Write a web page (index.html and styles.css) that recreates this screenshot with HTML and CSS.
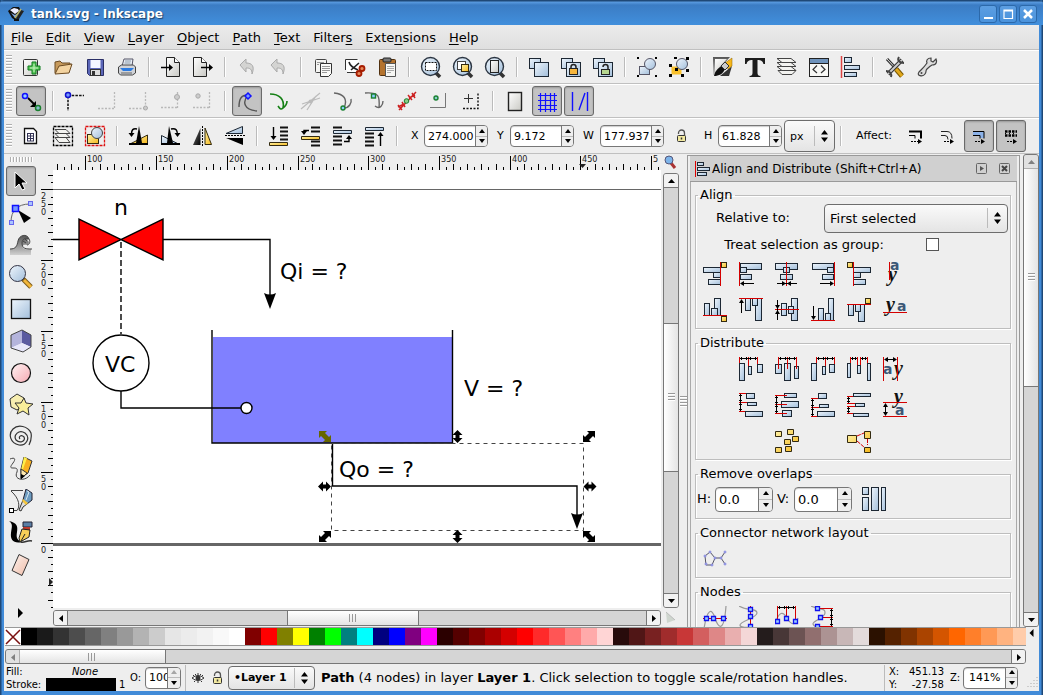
FILE: index.html
```
<!DOCTYPE html>
<html lang="en">
<head>
<meta charset="utf-8">
<title>tank.svg - Inkscape</title>
<link rel="stylesheet" href="styles.css">
</head>
<body>
<svg class="defs" aria-hidden="true">
  <defs>
    <linearGradient id="gb" x1="0" y1="0" x2="1" y2="1"><stop offset="0" stop-color="#eef5fc"/><stop offset="1" stop-color="#a3bfdb"/></linearGradient>
    <linearGradient id="gy" x1="0" y1="0" x2="1" y2="1"><stop offset="0" stop-color="#fff3a8"/><stop offset="1" stop-color="#f5b81c"/></linearGradient>
    <linearGradient id="gw" x1="0" y1="0" x2="1" y2="1"><stop offset="0" stop-color="#ffffff"/><stop offset="1" stop-color="#c9c9c4"/></linearGradient>
    <linearGradient id="gk" x1="0" y1="0" x2="1" y2="1"><stop offset="0" stop-color="#777"/><stop offset="1" stop-color="#000"/></linearGradient>
    <linearGradient id="gr" x1="0" y1="0" x2="1" y2="1"><stop offset="0" stop-color="#fff4f4"/><stop offset="1" stop-color="#f5a9b2"/></linearGradient>
    <linearGradient id="ge" x1="0" y1="0" x2="1" y2="1"><stop offset="0" stop-color="#fff4ee"/><stop offset="1" stop-color="#eebba8"/></linearGradient>
    <linearGradient id="gs" x1="0" y1="0" x2="0" y2="1"><stop offset="0" stop-color="#555"/><stop offset="1" stop-color="#d0d0d0"/></linearGradient>
    <symbol id="lens" viewBox="0 0 24 24"><path d="M17 18l4 4" stroke="#333" stroke-width="3.5"/><circle cx="11.500" cy="11.500" r="9" fill="url(#gb)" stroke="#2b3542" stroke-width="1.400"/></symbol>
    <symbol id="lock" viewBox="0 0 14 14"><path d="M4.500 5V4a3 3 0 0 1 6 0v3" fill="none" stroke="#555" stroke-width="1.300"/><rect x="3.500" y="6.500" width="8" height="6" rx="1" fill="#f2e9a0" stroke="#333"/><path d="M7.500 8.500v2" stroke="#333" stroke-width="1.500"/></symbol>
    <symbol id="bars" viewBox="0 0 24 24"><path d="M2.500 1v22" stroke="#d44" stroke-width="1.500"/><g class="b"><rect x="5.500" y="2.500" width="7" height="5"/><rect x="5.500" y="10.500" width="15" height="4"/><rect x="5.500" y="17.500" width="12" height="4"/></g></symbol>
    <symbol id="hgrip" viewBox="0 0 10 10"><path d="M1.500 1v8M4.500 1v8M7.500 1v8" stroke="#999"/></symbol>
  </defs>
</svg>

<div class="window">
  <header class="titlebar">
    <svg class="appicon" viewBox="0 0 18 16"><path d="M1 5L6 1h6l2 4-6 9-3-2z" fill="#111"/><path d="M3 4l4-2 4 1 1 2-4 3z" fill="#eef"/><path d="M4 7l4 2 3-2-3 5z" fill="#7ea7e0"/><path d="M9 13l5-9 3 1-5 8z" fill="#222"/><path d="M8 12l6-9" stroke="#b9b36a" stroke-width="1.500"/><path d="M7 14h5" stroke="#111" stroke-width="2"/></svg>
    <h1>tank.svg - Inkscape</h1>
    <div class="winbtns">
      <button aria-label="Minimize"><svg viewBox="0 0 16 16"><path d="M4 12h9" stroke="#fff" stroke-width="2"/></svg></button>
      <button aria-label="Maximize"><svg viewBox="0 0 16 16"><path d="M4 4h8.500v8.500H4zM4 5h9" fill="none" stroke="#fff" stroke-width="1.200"/></svg></button>
      <button aria-label="Close"><svg viewBox="0 0 16 16"><path d="M4 4l8 8M12 4l-8 8" stroke="#fff" stroke-width="2.500"/></svg></button>
    </div>
  </header>

  <nav class="menubar">
    <button><u>F</u>ile</button><button><u>E</u>dit</button><button><u>V</u>iew</button><button><u>L</u>ayer</button><button><u>O</u>bject</button><button><u>P</u>ath</button><button><u>T</u>ext</button><button>Filter<u>s</u></button><button>Exte<u>n</u>sions</button><button><u>H</u>elp</button>
  </nav>

  <div class="toolbar">
    <span class="grip"></span>
    <button class="tb" aria-label="New"><svg viewBox="0 0 24 24"><rect x="4.500" y="4.500" width="14" height="16" rx="1" fill="url(#gw)" stroke="#333"/><path d="M13 7h4v4h4v4h-4v4h-4v-4H9v-4h4z" fill="#5cc95c" stroke="#0d7a1c"/><path d="M15 9v8M11 13h8" stroke="#c8f0c0"/></svg></button>
    <button class="tb" aria-label="Open"><svg viewBox="0 0 24 24"><path d="M4 18V7l5-1 2 2h8v3" fill="#c79a5c" stroke="#6b4a22"/><path d="M4 19l4-8 13-2-3 9z" fill="#f3d3a0" stroke="#6b4a22"/></svg></button>
    <button class="tb" aria-label="Save"><svg viewBox="0 0 24 24"><path d="M4.500 4.500h16v16h-14l-2-2z" fill="#5b66b8" stroke="#2a2f66"/><rect x="7.500" y="5" width="10" height="8" fill="#f4f6ff"/><rect x="7.500" y="14.500" width="10" height="6" fill="#ddd" stroke="#333"/><rect x="9" y="16" width="3" height="4" fill="#333"/></svg></button>
    <button class="tb" aria-label="Print"><svg viewBox="0 0 24 24"><path d="M7 11l2-7h9l-1 7" fill="#e9eef5" stroke="#556"/><path d="M10 6h6M9.500 8h6" stroke="#89a"/><path d="M3.500 12l3-2h12l2 2v6l-3 2h-12l-2-2z" fill="#d0d3d8" stroke="#444"/><path d="M5 13h14l-3 3H8z" fill="#2c7be0"/><path d="M6 18h11" stroke="#666"/></svg></button>
    <span class="sep"></span>
    <button class="tb" aria-label="Import"><svg viewBox="0 0 24 24"><path d="M7.500 2.500h8l5 5v14h-13z" fill="url(#gw)" stroke="#222"/><path d="M15.500 2.500v5h5" fill="#fff" stroke="#222"/><path d="M2 12.500h9" stroke="#000" stroke-width="1.500"/><path d="M10 9l4 3.500-4 3.500z"/></svg></button>
    <button class="tb" aria-label="Export"><svg viewBox="0 0 24 24"><path d="M2.500 2.500h8l5 5v14h-13z" fill="url(#gw)" stroke="#222"/><path d="M10.500 2.500v5h5" fill="#fff" stroke="#222"/><path d="M10 12.500h9" stroke="#000" stroke-width="1.500"/><path d="M18 9l4 3.500-4 3.500z"/></svg></button>
    <span class="sep"></span>
    <button class="tb" aria-label="Undo"><svg viewBox="0 0 24 24"><path d="M5 10l6-6v4c6 0 9 3 6 11 0-5-2-6-6-6v4z" fill="#d4d4d2" stroke="#aaa"/></svg></button>
    <button class="tb" aria-label="Redo"><svg viewBox="0 0 24 24"><path d="M4 10l6-6v4c6 0 9 3 6 11 0-5-2-6-6-6v4z" fill="#d4d4d2" stroke="#aaa"/></svg></button>
    <span class="sep"></span>
    <button class="tb" aria-label="Copy"><svg viewBox="0 0 24 24"><rect x="4.500" y="4.500" width="11" height="13" rx="1" fill="#f4f4f2" stroke="#444"/><path d="M9.500 8.500h11v10l-3 3h-8z" fill="#fafaf8" stroke="#333"/><path d="M11 11.500h8M11 13.500h8M11 15.500h8M11 17.500h5M6 7.500h7M6 9.500h2" stroke="#999"/></svg></button>
    <button class="tb" aria-label="Cut"><svg viewBox="0 0 24 24"><path d="M2.500 4.500l13 0 2 6-4 7h-8l-3-3z" fill="#fff"/><path d="M2.500 15V4.500h12M4 17.500h9" fill="none" stroke="#333"/><path d="M6 7c1 4 4 6 9 8M8 15l8-7" fill="none" stroke="#222" stroke-width="1.600"/><circle cx="19" cy="13.500" r="2.500" fill="#e58a5b" stroke="#a61c00" stroke-width="1.800"/><circle cx="16" cy="18.500" r="2.500" fill="#e58a5b" stroke="#a61c00" stroke-width="1.800"/></svg></button>
    <button class="tb" aria-label="Paste"><svg viewBox="0 0 24 24"><rect x="4.500" y="4.500" width="16" height="16" rx="1" fill="#b4732e" stroke="#50300f"/><rect x="8" y="3" width="8" height="4" rx="1" fill="#777" stroke="#222"/><path d="M10.500 8.500h10v13h-10z" fill="#f7f7f4" stroke="#555"/><path d="M12 11.500h7M12 13.500h7M12 15.500h7M12 17.500h4" stroke="#aaa"/></svg></button>
    <span class="sep"></span>
    <button class="tb" aria-label="Zoom selection"><svg viewBox="0 0 24 24"><use href="#lens"/><rect x="6.500" y="7.500" width="11" height="8" fill="#fff" stroke="#111" stroke-dasharray="2 1"/></svg></button>
    <button class="tb" aria-label="Zoom drawing"><svg viewBox="0 0 24 24"><use href="#lens"/><rect x="6.500" y="6.500" width="8" height="8" fill="#fff" stroke="#444"/><rect x="10.500" y="9.500" width="7" height="7" class="y"/></svg></button>
    <button class="tb" aria-label="Zoom page"><svg viewBox="0 0 24 24"><use href="#lens"/><rect x="7.500" y="5.500" width="8" height="12" fill="url(#gw)" stroke="#222"/></svg></button>
    <span class="sep"></span>
    <button class="tb" aria-label="Duplicate"><svg viewBox="0 0 24 24" class="b"><rect x="2.500" y="3.500" width="11" height="10"/><rect x="7.500" y="7.500" width="14" height="14"/></svg></button>
    <button class="tb" aria-label="Clone"><svg viewBox="0 0 24 24"><g class="b"><rect x="2.500" y="3.500" width="11" height="10"/><rect x="7.500" y="7.500" width="14" height="14"/></g><path d="M12 14v-2a2.500 2.500 0 0 1 5 0v2" fill="none" stroke="#222" stroke-width="1.500"/><rect x="10.500" y="13.500" width="8" height="6" fill="#f5b53c" stroke="#222"/></svg></button>
    <button class="tb" aria-label="Unlink clone"><svg viewBox="0 0 24 24"><g class="b"><rect x="2.500" y="3.500" width="11" height="10"/><rect x="7.500" y="7.500" width="14" height="14"/></g><path d="M12 12a2.500 2.500 0 0 1 5 0v2" fill="none" stroke="#222" stroke-width="1.500"/><rect x="10.500" y="14.500" width="8" height="5" fill="#b6d690" stroke="#222"/></svg></button>
    <span class="sep"></span>
    <button class="tb" aria-label="Group"><svg viewBox="0 0 24 24"><rect x="4.500" y="11.500" width="10" height="8" fill="url(#gb)" stroke="#556"/><circle cx="15" cy="9" r="5.500" fill="url(#gb)" stroke="#556"/><path d="M2 2h2v2H2zM20 2h2v2h-2zM2 20h2v2H2zM20 20h2v2h-2z"/></svg></button>
    <button class="tb" aria-label="Ungroup"><svg viewBox="0 0 24 24"><rect x="4.500" y="11.500" width="10" height="8" fill="#f8c02c"/><circle cx="15" cy="9" r="5.500" fill="url(#gb)" stroke="#556"/><path d="M7 2h3v2H7zM19 2h3v3h-3zM2 9h3v3H2zM2 19h3v3H2zM19 14h3v3h-3zM14 19h3v3h-3zM8 13h3v3H8z"/></svg></button>
    <span class="sep"></span>
    <button class="tb" aria-label="Fill and stroke"><svg viewBox="0 0 24 24"><path d="M2 2h17L3 20H2z" fill="url(#gs)"/><path d="M4 4h12L4 17z" fill="url(#gw)"/><path d="M3 21c1-5 4-8 8-10l3 3c-2 5-6 7-11 7z" fill="#111"/><path d="M9 21h9l3-10z" fill="#333"/><path d="M14 8l7-5v8l-4 3z" fill="#f6b71c" stroke="#8a6200" stroke-width=".5"/><path d="M10 11l4-4 4 4-4 4z" fill="#ccc" stroke="#333"/></svg></button>
    <button class="tb" aria-label="Text and font"><svg viewBox="0 0 24 24"><path d="M2 3h20v6h-1.500c-1-3-2-4-6-4v13c0 2 1 3 3 3v1h-11v-1c2 0 3-1 3-3V5c-4 0-5 1-6 4H2z" fill="#1c1c1c"/></svg></button>
    <button class="tb" aria-label="Layers"><svg viewBox="0 0 24 24"><g fill="#f3f3f0" stroke="#444"><path d="M6 15.500h15l-4 4H7l-4-4z"/><path d="M2 11.500h14l5 4H7z"/><path d="M2 7.500h14l5 4H7z"/><path d="M2 3.500h14l5 4H7z"/></g></svg></button>
    <button class="tb" aria-label="XML editor"><svg viewBox="0 0 24 24"><rect x="2.500" y="3.500" width="19" height="18" fill="#f8f8f5" stroke="#222"/><path d="M3 4h18v4H3z" fill="#6f93bb"/><path d="M3 8.500h18" stroke="#222"/><path d="M10 10.500l-4 4 4 3.500M14 10.500l4 4-4 3.500" fill="none" stroke="#333" stroke-width="1.200"/></svg></button>
    <button class="tb" aria-label="Align"><svg viewBox="0 0 24 24"><use href="#bars"/></svg></button>
    <span class="sep"></span>
    <button class="tb" aria-label="Preferences"><svg viewBox="0 0 24 24"><path d="M4 4l14 15" stroke="#333" stroke-width="3"/><path d="M4 4l14 15" stroke="#ddd"/><path d="M19 5L5 19" stroke="#333" stroke-width="4"/><path d="M19 5L5 19" stroke="#ccc" stroke-width="2"/><path d="M16 2c-2 3 0 6 5 6M8 22c1-3-1-6-5-6" fill="none" stroke="#444" stroke-width="2"/><path d="M13 14l6 7" stroke="#7a5600" stroke-width="5"/><path d="M13 14l6 7" stroke="#e0a81c" stroke-width="3"/></svg></button>
    <button class="tb" aria-label="Document properties"><svg viewBox="0 0 24 24"><path d="M4 17c-3 4 4 5 6 2s0-3 2-5 3-3 5-4c5 0 5-4 4-6l-3 3-2-1v-3c-4 0-5 3-4 5-2 3-4 5-6 7z" fill="#ddd" stroke="#444" stroke-width="1.200"/><circle cx="6.500" cy="18" r="1" fill="#444"/></svg></button>
  </div>

  <div class="toolbar">
    <span class="grip"></span>
    <button class="tb on" aria-label="Enable snapping"><svg viewBox="0 0 24 24"><path d="M9 9l6 6" stroke="#000" stroke-width="1.800"/><path d="M17 12v6h-6z"/><circle cx="6" cy="7" r="2.500" fill="#9cf" stroke="#11f" stroke-width="1.500"/><circle cx="19" cy="19" r="2.500" fill="#8bc" stroke="#1a8030" stroke-width="1.500"/></svg></button>
    <span class="sep"></span>
    <button class="tb" aria-label="Snap bounding box"><svg viewBox="0 0 24 24"><path d="M5 6.500h16M5 7v15" stroke="#111" stroke-width="1.500" stroke-dasharray="2.500 1.200"/><circle cx="5" cy="6" r="2.500" fill="#79f" stroke="#11c" stroke-width="1.500"/></svg></button>
    <button class="tb" aria-label="Snap edges"><svg viewBox="0 0 24 24" class="dis"><path d="M3 19.500h16M19.500 3v16"/></svg></button>
    <button class="tb" aria-label="Snap corners"><svg viewBox="0 0 24 24" class="dis"><path d="M2 19.500h16M18.500 3v14"/><circle cx="18.500" cy="19" r="2" class="solid"/></svg></button>
    <button class="tb" aria-label="Snap edge midpoints"><svg viewBox="0 0 24 24" class="dis"><path d="M2 18.500h16M18.500 3v16"/><circle cx="18" cy="8" r="2.500" class="solid"/></svg></button>
    <button class="tb" aria-label="Snap centers"><svg viewBox="0 0 24 24" class="dis"><path d="M2 18.500h16M18.500 3v16"/><circle cx="7" cy="7" r="2.200" class="solid"/></svg></button>
    <span class="sep"></span>
    <button class="tb on" aria-label="Snap nodes"><svg viewBox="0 0 24 24"><path d="M4 18c0-8 2-12 9-12-6 7-4 15 9 16" fill="none" stroke="#555" stroke-width="1.400"/><path d="M13 4l3 3-3 3-3-3z" fill="#79f" stroke="#11f" stroke-width="1.500"/></svg></button>
    <button class="tb" aria-label="Snap paths"><svg viewBox="0 0 24 24" class="grn"><path d="M3 5c9 0 15 5 13 14-2 2-3 1-5-2M16 19c3-2 4-5 4-7"/></svg></button>
    <button class="tb" aria-label="Snap intersections"><svg viewBox="0 0 24 24"><path d="M2 20L21 4M3 15l18-6M17 7L8 21" stroke="#bbb" stroke-width="1.200"/><circle cx="11.500" cy="12.500" r="2" fill="#bbb"/></svg></button>
    <button class="tb" aria-label="Snap cusp nodes"><svg viewBox="0 0 24 24"><path d="M3 4c10 1 14 6 10 15M13 19c5 0 8-5 7-9" fill="none" stroke="#666" stroke-width="1.400"/><circle cx="12" cy="19" r="2" fill="#8cf" stroke="#1a8030" stroke-width="1.400"/></svg></button>
    <button class="tb" aria-label="Snap smooth nodes"><svg viewBox="0 0 24 24"><path d="M2 4c14-1 15 3 14 15M12 17c5 4 8-1 8-5" fill="none" stroke="#666" stroke-width="1.400"/><rect x="8.500" y="5" width="4" height="4" fill="#8cf" stroke="#1a8030" stroke-width="1.400"/></svg></button>
    <button class="tb" aria-label="Snap line midpoints"><svg viewBox="0 0 24 24"><path d="M4 21L21 3M3 16l4 5M7 13l3 5M13 6l4 5M17 4l3 5M3 18l6-3M14 9l6-3" stroke="#c22" stroke-width="1.500"/><circle cx="11.500" cy="12" r="2.300" fill="#8c8" stroke="#1a8030"/></svg></button>
    <button class="tb" aria-label="Snap object centers"><svg viewBox="0 0 24 24"><path d="M3 18.500h15.500V4" fill="none" stroke="#777"/><circle cx="9" cy="9" r="2" fill="#8cc" stroke="#1a8030" stroke-width="1.400"/></svg></button>
    <button class="tb" aria-label="Snap rotation centers"><svg viewBox="0 0 24 24"><path d="M5 9.500h9M9.500 5v9" stroke="#333"/><path d="M4 19.500h15V3" fill="none" stroke="#111" stroke-width="1.400" stroke-dasharray="2 1.500"/></svg></button>
    <span class="sep"></span>
    <button class="tb" aria-label="Snap page border"><svg viewBox="0 0 24 24"><rect x="5.500" y="3.500" width="13" height="18" fill="url(#gw)" stroke="#222" stroke-width="1.400"/></svg></button>
    <button class="tb on" aria-label="Snap grid"><svg viewBox="0 0 24 24"><path d="M3 6.500h19M3 11.500h19M3 16.500h19M3 20.500h19M5.500 4v19M10.500 4v19M15.500 4v19M19.500 4v19" stroke="#11f" stroke-width="1.200"/></svg></button>
    <button class="tb on" aria-label="Snap guides"><svg viewBox="0 0 24 24"><path d="M5.500 3v19M12 21l6-17M20.500 3v19" stroke="#11f" stroke-width="1.400"/></svg></button>
  </div>

  <div class="toolbar tall">
    <span class="grip"></span>
    <button class="tb" aria-label="Select all"><svg viewBox="0 0 24 24"><path d="M5.500 4.500h9l3 3v12h-12z" fill="#fff" stroke="#111" stroke-width="1.300"/><path d="M8 9.500h7M8 12h7M8 14.500h7M8 17h7M8.500 9v8M11.500 9v8M14.500 9v8" stroke="#335"/></svg></button>
    <button class="tb" aria-label="Select all in layers"><svg viewBox="0 0 24 24"><rect x="2.500" y="2.500" width="19" height="19" fill="none" stroke="#000" stroke-width="1.300" stroke-dasharray="3 1"/><g fill="#f3f3f0" stroke="#444"><path d="M4 13.500h11l4 5H8z"/><path d="M4 9.500h11l4 4H8z"/><path d="M4 5.500h11l4 4H8z"/></g></svg></button>
    <button class="tb" aria-label="Deselect"><svg viewBox="0 0 24 24"><rect x="2.500" y="2.500" width="19" height="19" fill="none" stroke="#d11" stroke-width="1.300" stroke-dasharray="3 1"/><rect x="4.500" y="10.500" width="11" height="9" class="y"/><circle cx="14" cy="9" r="5.500" fill="url(#gb)" stroke="#444"/></svg></button>
    <span class="sep"></span>
    <button class="tb" aria-label="Rotate left"><svg viewBox="0 0 24 24"><path d="M20.500 11v8.500H4z" class="y"/><path d="M12 2l3 17H9z"/><path d="M2 20h19" stroke="#000" stroke-width="2"/><path d="M10 5C6 4 4.500 6 4.500 10" fill="none" stroke="#000" stroke-width="1.500"/><path d="M1.500 9h6l-3 4z"/></svg></button>
    <button class="tb" aria-label="Rotate right"><svg viewBox="0 0 24 24"><path d="M2.500 11.500l16 8h-16z" class="b"/><path d="M10 2l4 17H8z"/><path d="M2 20h19" stroke="#000" stroke-width="2"/><path d="M12 5c5-1 6.500 1 6.500 6" fill="none" stroke="#000" stroke-width="1.500"/><path d="M15.500 9h6l-3 4z"/></svg></button>
    <button class="tb" aria-label="Flip horizontal"><svg viewBox="0 0 24 24"><path d="M9.500 4v17H2z" fill="url(#gk)"/><path d="M14 4v16.500h6.500z" class="y"/><path d="M11.500 2v20" stroke="#000" stroke-dasharray="2 1"/></svg></button>
    <button class="tb" aria-label="Flip vertical"><svg viewBox="0 0 24 24"><path d="M19.500 2.500v7L3 9.500z" class="b"/><path d="M20 21v-7H3z"/><path d="M2 11.500h20" stroke="#000" stroke-dasharray="2 1"/></svg></button>
    <span class="sep"></span>
    <button class="tb" aria-label="Lower to bottom"><svg viewBox="0 0 24 24"><path d="M13 3.500h8M13 7.500h8M13 11.500h8M13 15.500h8" stroke="#111" stroke-width="2"/><path d="M2.500 18.500h18v3h-18z" class="y"/><path d="M6.500 3v10" stroke="#000" stroke-width="1.400"/><path d="M3.500 12h6l-3 4z"/></svg></button>
    <button class="tb" aria-label="Lower"><svg viewBox="0 0 24 24"><path d="M12 3.500h9M12 7.500h9M12 17.500h9M12 21.500h9" stroke="#111" stroke-width="2"/><path d="M2.500 12.500h18v3h-18z" class="y"/><path d="M10 6.500H5v2" fill="none" stroke="#000" stroke-width="1.400"/><path d="M2 7h6l-3 4z"/></svg></button>
    <button class="tb" aria-label="Raise"><svg viewBox="0 0 24 24"><path d="M2 3.500h9M2 12.500h9M2 16.500h9M2 20.500h9" stroke="#111" stroke-width="2"/><path d="M2.500 6.500h18v3h-18z" class="b"/><path d="M13 17.500h5v-3" fill="none" stroke="#000" stroke-width="1.400"/><path d="M15 15h6l-3-4z"/></svg></button>
    <button class="tb" aria-label="Raise to top"><svg viewBox="0 0 24 24"><path d="M2 9.500h9M2 13.500h9M2 17.500h9M2 21.500h9" stroke="#111" stroke-width="2"/><path d="M2.500 3.500h18v3h-18z" class="b"/><path d="M17.500 11v11" stroke="#000" stroke-width="1.400"/><path d="M14.500 12h6l-3-4z"/></svg></button>
    <span class="sep"></span>
    <label class="coord" for="cx">X</label>
    <span class="spin"><input id="cx" value="274.000"><span class="steps"><button aria-label="Increase X"></button><button aria-label="Decrease X"></button></span></span>
    <label class="coord" for="cy">Y</label>
    <span class="spin"><input id="cy" value="9.172"><span class="steps"><button aria-label="Increase Y"></button><button aria-label="Decrease Y"></button></span></span>
    <label class="coord" for="cw">W</label>
    <span class="spin"><input id="cw" value="177.937"><span class="steps"><button aria-label="Increase W"></button><button aria-label="Decrease W"></button></span></span>
    <button class="lockbtn" aria-label="Lock ratio"><svg viewBox="0 0 14 14"><use href="#lock"/></svg></button>
    <label class="coord hlab" for="ch">H</label>
    <span class="spin"><input id="ch" value="61.828"><span class="steps"><button aria-label="Increase H"></button><button aria-label="Decrease H"></button></span></span>
    <select class="combo unit" aria-label="Unit"><option>px</option></select>
    <span class="sep"></span>
    <span class="affect">Affect:</span>
    <button class="tb" aria-label="Scale stroke"><svg viewBox="0 0 24 24"><path d="M6 7.500h12v7" fill="none" stroke="#000" stroke-width="2"/><path d="M6 11.500h6v3" fill="none" stroke="#000"/><path d="M8 17.500h7" stroke="#000" stroke-dasharray="2 1"/><path d="M15 15l4 2.500-4 2.500z"/></svg></button>
    <button class="tb" aria-label="Scale corners"><svg viewBox="0 0 24 24"><path d="M6 7.500h6q5 0 5 7M6 11.500h4q3 0 3 4" fill="none" stroke="#222"/><path d="M9 17.500h7" stroke="#000" stroke-dasharray="2 1"/><path d="M15 15l4 2.500-4 2.500z"/></svg></button>
    <button class="tb on" aria-label="Move gradients"><svg viewBox="0 0 24 24"><path d="M6 8h11v6h-4v-3H6z" fill="#8cb2e8"/><path d="M6 7.500h11v7M6 11.500h7v3" fill="none" stroke="#000"/><path d="M8 17.500h7" stroke="#000" stroke-dasharray="2 1"/><path d="M14 15l4 2.500-4 2.500z"/></svg></button>
    <button class="tb on" aria-label="Move patterns"><svg viewBox="0 0 24 24"><path d="M6 7.500h12M6 11.500h12" stroke="#000" stroke-width="2.500" stroke-dasharray="2.500 1"/><path d="M6 9.500h12" stroke="#000" stroke-dasharray="1 3"/><path d="M8 17.500h7" stroke="#000" stroke-dasharray="2 1"/><path d="M14 15l4 2.500-4 2.500z"/></svg></button>
  </div>

  <main class="work">
    <aside class="toolbox">
      <span class="grip flat"></span>
      <button class="tool on" aria-label="Selector"><svg viewBox="0 0 24 24"><path d="M6 3v16l4-4 3 6 3-1-3-6h5z" fill="#000" stroke="#fff"/></svg></button>
      <button class="tool" aria-label="Node"><svg viewBox="0 0 24 24"><path d="M2 21C2 10 8 3 21 3" fill="none" stroke="#666"/><path d="M9 9l13 8-7 5z"/><g fill="#aac4ff" stroke="#66e"><rect x=".5" y="19.500" width="4" height="4"/><rect x="19.500" y=".5" width="4" height="4"/></g><rect x="3.500" y="4.500" width="6" height="6" fill="#79f" stroke="#11f" stroke-width="1.500"/></svg></button>
      <button class="tool" aria-label="Tweak"><svg viewBox="0 0 24 24"><path d="M1 22v-6c6 0 7-3 8-8 1-6 9-8 11-2l-2 1c2 1 3 4 0 5-3-1-5 0-4 3 2 2 5 1 8 1v6z" fill="url(#gs)"/><path d="M1 16c6 0 7-3 8-8 1-6 9-8 11-2-3-2-7 0-7 4 0 6 4 6 10 6M20 6c2 3 0 6-2 6M16 6l2 2M14 8l3 2" fill="none" stroke="#444"/></svg></button>
      <button class="tool" aria-label="Zoom"><svg viewBox="0 0 24 24"><path d="M14 14l8 8" stroke="#7b5a18" stroke-width="5"/><path d="M15 15l7 7" stroke="#f2b63a" stroke-width="3"/><circle cx="8.500" cy="8.500" r="8" fill="url(#gb)" stroke="#334"/></svg></button>
      <button class="tool" aria-label="Rectangle"><svg viewBox="0 0 24 24"><rect x="2.500" y="2.500" width="19" height="19" fill="url(#gb)" stroke="#111" stroke-width="1.300"/></svg></button>
      <button class="tool" aria-label="3D box"><svg viewBox="0 0 24 24"><path d="M2 6l11-5v13L2 19z" fill="#b4b4dc"/><path d="M13 1l9 5v12l-9-4z" fill="#5a5aa0"/><path d="M2 19l11-5 9 4-8 5z" fill="#e7e7fa"/><path d="M2 6l11-5 9 5v12l-8 5-12-4z" fill="none" stroke="#444"/></svg></button>
      <button class="tool" aria-label="Ellipse"><svg viewBox="0 0 24 24"><circle cx="12" cy="12" r="9.500" fill="url(#gr)" stroke="#111" stroke-width="1.200"/></svg></button>
      <button class="tool" aria-label="Star"><svg viewBox="0 0 24 24"><path d="M1 6l7-5 7 4v8l-7 4-6-3z" fill="#f7eeb0" stroke="#333"/><path d="M15 5l2 5 7 1-5 4 1 7-6-4-6 3 2-6-4-5h6z" fill="#f9ef9a" stroke="#333"/></svg></button>
      <button class="tool" aria-label="Spiral"><svg viewBox="0 0 24 24"><path d="M11 14c-2-2 1-5 4-2 2 4-4 7-8 3-3-5 3-11 9-7 6 5 1 13-6 12C1 18-1 9 4 4s15-3 18 4c1 5 0 8-2 12" fill="none" stroke="#333" stroke-width="1.200"/></svg></button>
      <button class="tool" aria-label="Pencil"><svg viewBox="0 0 24 24"><path d="M1 2c5-2 6 0 3 4s-3 5 0 5 5 0 4 4c-4 8 8 10 13 3" fill="none" stroke="#444"/><path d="M15 0l8 4-4 12-7 5 0-9z" fill="#f8b020" stroke="#333"/><path d="M15 0l3 1-4 11-2 1z" fill="#fff04a"/><path d="M12 12l6 4-6 6z" fill="#ffe9b0" stroke="#333"/><path d="M12 17v5l4-3z"/></svg></button>
      <button class="tool" aria-label="Bezier"><svg viewBox="0 0 24 24"><path d="M2 1.500h12M2 2c9 8 9 16 6 19.500H4" fill="none" stroke="#444"/><rect x=".5" y="19.500" width="4" height="4" fill="#fff" stroke="#000"/><path d="M17 0l6 4v7l-5 4-4-4z" fill="#6d9cc0" stroke="#223"/><path d="M14 11l4 4-4 3-2 4-2-1 2-5z" fill="#ddd" stroke="#333"/><path d="M14 10l5 4-2 2-4-4z" fill="#f4c53c"/><path d="M18 2l2 1-3 8" stroke="#d8e8f4" fill="none"/></svg></button>
      <button class="tool" aria-label="Calligraphy"><svg viewBox="0 0 24 24"><path d="M0 0c8 2 9 5 8 11s0 8 5 10c-8 2-12-2-11-9S4 3 0 0z"/><path d="M12 21c4 1 6-2 11-1" fill="none" stroke="#333" stroke-width="1.500"/><path d="M14 1h9v5h-9z" fill="#5b7fa5" stroke="#223"/><path d="M14 6h7v3h-7z" fill="#c0392b"/><path d="M13 8l8 1-1 7-9 5-1-4z" fill="#f6cf58" stroke="#222"/><path d="M12 20l4-7" stroke="#222"/></svg></button>
      <button class="tool" aria-label="Eraser"><svg viewBox="0 0 24 24"><path d="M10 1.500l10 5-7 16-10-5z" fill="url(#ge)" stroke="#333"/></svg></button>
      <button class="more" aria-label="More tools"><svg viewBox="0 0 8 10"><path d="M1 0v10l5-5z"/></svg></button>
    </aside>

    <section class="editor">
      <span></span>
      <svg class="ruler" id="hruler"><g></g><path d="M579 10h7l-3.500 4z" transform="translate(-53)"/></svg>
      <button class="cornerbtn" aria-label="Zoom on resize"><svg viewBox="0 0 14 14"><path d="M8 8l4 5" stroke="#a33" stroke-width="3"/><circle cx="6" cy="5" r="4" fill="#7db4ea" stroke="#557"/></svg></button>
      <svg class="ruler" id="vruler"><g></g><path d="M8 408l4 4-4 4z"/></svg>
      <svg class="canvas" role="img" aria-label="Tank drawing">
        <g transform="translate(-53 -170)">
          <path d="M0 189.500h4000" stroke="#666"/>
          <path d="M0 544.500h4000" stroke="#666" stroke-width="3"/>
          <g fill="none" stroke="#000" stroke-width="1.400">
            <path d="M40 239.500H79M163 239.500h107V297"/>
            <path d="M121 242v92" stroke-dasharray="6 3"/>
            <path d="M79 219v41l84-41v41z" fill="#f00"/>
            <circle cx="121" cy="363" r="28"/>
          </g>
          <path d="M213 337h239v106H213z" fill="#8080ff"/>
          <g fill="none" stroke="#000" stroke-width="1.400">
            <path d="M212 330v113h240.500V330"/>
            <path d="M121 391v17h122"/>
            <circle cx="246.500" cy="408" r="5.500" fill="#fff"/>
            <path d="M332.500 443v43H577v30"/>
          </g>
          <path d="M264 293q6 3 12 0l-6 16zM571 513q6 3 12 0l-6 16z"/>
          <g class="drawtext">
            <text x="114" y="215">n</text><text x="105" y="372">VC</text><text x="280" y="279">Qi = ?</text><text x="464" y="396">V = ?</text><text x="339" y="477">Qo = ?</text>
          </g>
          <path d="M331.500 443.500h252v87h-252z" fill="none" stroke="#444" stroke-dasharray="4 4"/>
          <path d="M319 431h8l-2 2 4 4 2-2v7h-8l2-2-4-4-2 2z" fill="#660"/>
          <path d="M583 531h8l-2 2 4 4 2-2v7h-8l2-2-4-4-2 2z"/>
          <path d="M595 431v7l-2-2-4 4 2 2h-8v-7l2 2 4-4-2-2zM331 531v7l-2-2-4 4 2 2h-8v-7l2 2 4-4-2-2z"/>
          <path d="M457.500 430l5 5h-3v3h3l-5 5-5-5h3v-3h-3zM457.500 530l5 5h-3v3h3l-5 5-5-5h3v-3h-3z"/>
          <path d="M318 486.500l5-5v3h3v-3l5 5-5 5v-3h-3v3zM583.500 486.500l5-5v3h3v-3l5 5-5 5v-3h-3v3z"/>
        </g>
      </svg>
      <div class="vscroll">
        <button class="arrow up" aria-label="Scroll up"></button><span class="trackpart t1"></span><span class="thumb"><i></i></span><span class="trackpart t2"></span><button class="arrow down" aria-label="Scroll down"></button>
      </div>
      <span></span>
      <div class="hscroll">
        <button class="arrow left" aria-label="Scroll left"></button><span class="trackpart t1"></span><span class="thumb"><svg viewBox="0 0 10 10"><use href="#hgrip"/></svg></span><span class="trackpart t2"></span><button class="arrow right" aria-label="Scroll right"></button>
      </div>
      <button class="cornerbtn" aria-label="Color management"><svg viewBox="0 0 14 14"><path d="M3 2l9 8-8 3z" fill="#cfd6cf"/><path d="M3 2l9 8" stroke="#bbb"/></svg></button>
    </section>

    <div class="splitter"><i></i></div>

    <section class="dock">
      <div class="docktitle">
        <svg viewBox="0 0 16 16"><path d="M.5 0v16" stroke="#d00"/><g class="b"><rect x="2.500" y="1.500" width="6" height="3"/><rect x="2.500" y="6.500" width="12" height="3"/><rect x="2.500" y="11.500" width="9" height="3"/></g></svg>
        <h2>Align and Distribute (Shift+Ctrl+A)</h2>
        <button aria-label="Iconify"><svg viewBox="0 0 12 12"><rect x=".5" y=".5" width="10" height="10" rx="1" fill="none" stroke="#666"/><path d="M4 3v5l4-2.500z" fill="#555"/></svg></button>
        <button aria-label="Close dialog"><svg viewBox="0 0 12 12"><rect x=".5" y=".5" width="10" height="10" rx="1" fill="none" stroke="#666"/><path d="M3 3l5 5M8 3L3 8" stroke="#444" stroke-width="2"/></svg></button>
      </div>
      <div class="dockbody">
        <fieldset>
          <legend>Align</legend>
          <div class="relrow"><label for="rel">Relative to:</label><select id="rel" class="combo rel"><option>First selected</option></select></div>
          <div class="treatrow"><label for="treat">Treat selection as group:</label><input id="treat" type="checkbox"></div>
          <div class="icongrid al">
            <button aria-label="Right to left of anchor"><svg viewBox="0 0 24 24"><g class="b"><rect x=".5" y="5.500" width="17" height="5"/><rect x="10.500" y="10.500" width="7" height="5"/><rect x="5.500" y="17.500" width="12" height="5"/></g><rect x="18.500" y=".5" width="5" height="5" class="y"/><path class="r" d="M17.500 0v24"/></svg></button>
            <button aria-label="Align left"><svg viewBox="0 0 24 24"><g class="b"><rect x="1.500" y="1.500" width="21" height="6"/><rect x="1.500" y="5.500" width="6" height="5"/><rect x="1.500" y="12.500" width="11" height="5"/></g><path class="r" d="M.5 0v24"/><path class="k" d="M2 21.500h13"/><path d="M5 19v5l-4-2.500z"/></svg></button>
            <button aria-label="Center horizontally"><svg viewBox="0 0 24 24"><g class="b"><rect x=".5" y="1.500" width="22" height="6"/><rect x="8.500" y="5.500" width="6" height="5"/><rect x="5.500" y="12.500" width="12" height="5"/></g><path class="r" d="M11.500 0v24"/><path class="k" d="M2 21.500h20"/><path d="M7 19v5l4-2.500zM16 19v5l-4-2.500z"/></svg></button>
            <button aria-label="Align right"><svg viewBox="0 0 24 24"><g class="b"><rect x="1.500" y="1.500" width="21" height="6"/><rect x="16.500" y="5.500" width="6" height="5"/><rect x="11.500" y="12.500" width="11" height="5"/></g><path class="r" d="M23.500 0v24"/><path class="k" d="M9 21.500h13"/><path d="M19 19v5l4-2.500z"/></svg></button>
            <button aria-label="Left to right of anchor"><svg viewBox="0 0 24 24"><g class="b"><rect x="6.500" y="5.500" width="17" height="5"/><rect x="6.500" y="10.500" width="7" height="5"/><rect x="6.500" y="17.500" width="12" height="5"/></g><rect x=".5" y=".5" width="5" height="5" class="y"/><path class="r" d="M6.500 0v24"/></svg></button>
            <button aria-label="Align text horizontally"><svg viewBox="0 0 24 24"><text x="7" y="8" class="ga">a</text><text x="5" y="19" class="gy">y</text><path class="r" d="M6.500 0v18"/></svg></button>
            <button aria-label="Bottom to top of anchor"><svg viewBox="0 0 24 24"><g class="b"><rect x="1.500" y="5.500" width="5" height="12"/><rect x="11.500" y=".5" width="6" height="17"/><rect x="8.500" y="10.500" width="6" height="7"/></g><rect x="18.500" y="18.500" width="5" height="5" class="y"/><path class="r" d="M0 17.500h24"/></svg></button>
            <button aria-label="Align top"><svg viewBox="0 0 24 24"><g class="b"><rect x="6.500" y=".5" width="5" height="12"/><rect x="16.500" y=".5" width="6" height="22"/><rect x="13.500" y=".5" width="5" height="7"/></g><path class="r" d="M0 .5h24"/><path class="k" d="M2.500 2v13"/><path d="M0 5h5L2.500 1z"/></svg></button>
            <button aria-label="Center vertically"><svg viewBox="0 0 24 24"><g class="b"><rect x="6.500" y="5.500" width="5" height="12"/><rect x="16.500" y=".5" width="6" height="22"/><rect x="13.500" y="8.500" width="5" height="7"/></g><path class="r" d="M0 11.500h24"/><path class="k" d="M2.500 2v20"/><path d="M0 7h5l-2.500 4zM0 16h5l-2.500-4z"/></svg></button>
            <button aria-label="Align bottom"><svg viewBox="0 0 24 24"><g class="b"><rect x="7.500" y="10.500" width="5" height="12"/><rect x="17.500" y=".5" width="5" height="22"/><rect x="14.500" y="15.500" width="5" height="7"/></g><path class="r" d="M0 22.500h24"/><path class="k" d="M2.500 8v13"/><path d="M0 18h5l-2.500 4z"/></svg></button>
            <button aria-label="Top to bottom of anchor"><svg viewBox="0 0 24 24"><g class="b"><rect x="1.500" y="6.500" width="5" height="11"/><rect x="11.500" y="6.500" width="6" height="17"/><rect x="8.500" y="6.500" width="5" height="7"/></g><rect x="18.500" y=".5" width="5" height="5" class="y"/><path class="r" d="M0 6.500h24"/></svg></button>
            <button aria-label="Align text baselines"><svg viewBox="0 0 24 24"><text x="3" y="13" class="gy">y</text><text x="14" y="13" class="ga">a</text><path class="r" d="M0 14.500h24"/></svg></button>
          </div>
        </fieldset>

        <fieldset>
          <legend>Distribute</legend>
          <div class="icongrid di">
            <button aria-label="Distribute left edges"><svg viewBox="0 0 24 24"><g class="b"><rect x=".5" y="6.500" width="5" height="17"/><rect x="9.500" y="9.500" width="3" height="8"/><rect x="18.500" y="7.500" width="5" height="8"/></g><path class="r" d="M.5 0v6M9.500 0v9M18.500 0v7"/><path class="k" d="M1 1.500h17M2.500 0v3M7.500 0v3M11.500 0v3M16.500 0v3"/></svg></button>
            <button aria-label="Distribute centers"><svg viewBox="0 0 24 24"><g class="b"><rect x=".5" y="7.500" width="6" height="9"/><rect x="9.500" y="6.500" width="6" height="17"/><rect x="19.500" y="9.500" width="4" height="12"/></g><path class="r" d="M3.500 0v12M12.500 0v12M21.500 0v12"/><path class="k" d="M4 1.500h17M5.500 0v3M10.500 0v3M14.500 0v3M19.500 0v3"/></svg></button>
            <button aria-label="Distribute right edges"><svg viewBox="0 0 24 24"><g class="b"><rect x=".5" y="6.500" width="5" height="17"/><rect x="11.500" y="9.500" width="3" height="8"/><rect x="18.500" y="7.500" width="5" height="8"/></g><path class="r" d="M5.500 0v6M14.500 0v9M23.500 0v7"/><path class="k" d="M6 1.500h17M7.500 0v3M12.500 0v3M16.500 0v3M21.500 0v3"/></svg></button>
            <button aria-label="Equal horizontal gaps"><svg viewBox="0 0 24 24"><g class="b"><rect x=".5" y="6.500" width="3" height="14"/><rect x="10.500" y="8.500" width="3" height="8"/><rect x="20.500" y="6.500" width="3" height="17"/></g><path class="r" d="M3.500 0v6M10.500 0v8M13.500 0v8M20.500 0v6"/><path class="k" d="M4 1.500h6M14 1.500h6M5.500 0v3M8.500 0v3M15.500 0v3M18.500 0v3"/></svg></button>
            <button aria-label="Distribute text anchors"><svg viewBox="0 0 24 24"><text x="0" y="17" class="ga">a</text><text x="11" y="18" class="gy">y</text><path class="r" d="M.5 0v24M14.500 0v24"/><path class="k" d="M2 2.500h11"/><path d="M5 0v5L1 2.500zM10 0v5l4-2.500z"/></svg></button>
            <button aria-label="Distribute top edges"><svg viewBox="0 0 24 24"><g class="b"><rect x="7.500" y=".5" width="8" height="5"/><rect x="8.500" y="9.500" width="9" height="3"/><rect x="6.500" y="18.500" width="17" height="5"/></g><path class="r" d="M0 .5h7M0 9.500h8M0 18.500h6"/><path class="k" d="M1.500 1v17M0 2.500h3M0 7.500h3M0 11.500h3M0 16.500h3"/></svg></button>
            <button aria-label="Distribute middles"><svg viewBox="0 0 24 24"><g class="b"><rect x="9.500" y=".5" width="12" height="4"/><rect x="6.500" y="8.500" width="17" height="6"/><rect x="7.500" y="17.500" width="9" height="6"/></g><path class="r" d="M0 2.500h12M0 11.500h12M0 20.500h12"/><path class="k" d="M1.500 3v17M0 4.500h3M0 9.500h3M0 13.500h3M0 18.500h3"/></svg></button>
            <button aria-label="Distribute bottom edges"><svg viewBox="0 0 24 24"><g class="b"><rect x="7.500" y=".5" width="8" height="5"/><rect x="8.500" y="11.500" width="9" height="3"/><rect x="6.500" y="18.500" width="17" height="5"/></g><path class="r" d="M0 5.500h7M0 14.500h8M0 23.500h6"/><path class="k" d="M1.500 6v17M0 7.500h3M0 12.500h3M0 16.500h3M0 21.500h3"/></svg></button>
            <button aria-label="Equal vertical gaps"><svg viewBox="0 0 24 24"><g class="b"><rect x="6.500" y=".5" width="17" height="3"/><rect x="8.500" y="10.500" width="9" height="3"/><rect x="6.500" y="20.500" width="15" height="3"/></g><path class="r" d="M0 3.500h6M0 10.500h8M0 13.500h8M0 20.500h6"/><path class="k" d="M1.500 4v6M1.500 14v6M0 5.500h3M0 8.500h3M0 15.500h3M0 18.500h3"/></svg></button>
            <button aria-label="Distribute baselines"><svg viewBox="0 0 24 24"><text x="11" y="10" class="gy">y</text><text x="12" y="22" class="ga">a</text><path class="r" d="M0 9.500h24M0 23.500h24"/><path class="k" d="M2.500 11v11"/><path d="M0 14h5l-2.500-4zM0 19h5l-2.500 4z"/></svg></button>
            <button class="c2" aria-label="Randomize"><svg viewBox="0 0 24 24"><path class="y" d="M.5 2.500h6v5h-6zM12.500.5h6v5h-6zM17.500 7.500h6v5h-6zM9.500 10.500h6v5h-6zM.5 18.500h6v5h-6zM10.500 17.500h6v5h-6z"/></svg></button>
            <button class="c4" aria-label="Unclump"><svg viewBox="0 0 24 24"><path class="r" d="M10 7l7-3M10 12l7 6M20.500 10v6" stroke-dasharray="4 1"/><path class="y" d="M.5 6.500h9v7h-9zM17.500 2.500h6v7h-6zM17.500 18.500h6v5h-6z"/></svg></button>
          </div>
        </fieldset>

        <fieldset>
          <legend>Remove overlaps</legend>
          <div class="overlap">
            <label for="oh">H:</label><span class="spin big"><input id="oh" value="0.0"><span class="steps"><button aria-label="Increase H gap"></button><button aria-label="Decrease H gap"></button></span></span>
            <label for="ov">V:</label><span class="spin big"><input id="ov" value="0.0"><span class="steps"><button aria-label="Increase V gap"></button><button aria-label="Decrease V gap"></button></span></span>
            <button class="ico" aria-label="Remove overlaps"><svg viewBox="0 0 24 24" class="b"><rect x=".5" y=".5" width="6" height="7"/><rect x=".5" y="10.500" width="6" height="13"/><rect x="9.500" y=".5" width="7" height="23"/><rect x="19.500" y=".5" width="4" height="23"/></svg></button>
          </div>
        </fieldset>

        <fieldset>
          <legend>Connector network layout</legend>
          <button class="ico" aria-label="Arrange connector network"><svg viewBox="0 0 24 24"><path d="M2 9l5-4 5 6-3 7H3zM12 11h6M18 11l4-6M18 11l4 6" fill="none" stroke="#556"/><g fill="#abf" stroke="#88d"><circle cx="2" cy="9" r="1"/><circle cx="7" cy="5" r="1"/><circle cx="12" cy="11" r="1"/><circle cx="9" cy="18" r="1"/><circle cx="3" cy="17" r="1"/><circle cx="18" cy="11" r="1"/><circle cx="22" cy="5" r="1"/><circle cx="22" cy="17" r="1"/></g></svg></button>
        </fieldset>

        <fieldset class="nodes">
          <legend>Nodes</legend>
          <div class="noderow">
            <button class="ico" aria-label="Align nodes horizontally"><svg viewBox="0 0 24 24"><path d="M1 23C4 2 9 2 12 12s9 16 11-12" class="g"/><path class="r" d="M0 12.500h24"/><path class="n" d="M1.500 10.500h4v4h-4zM8.500 10.500h4v4h-4zM18.500 10.500h4v4h-4z"/></svg></button>
            <button class="ico" aria-label="Align nodes vertically"><svg viewBox="0 0 24 24"><path d="M0 0c8 5 18 2 18 7s-17 8-17 12 9 1 23 4" class="g"/><path class="r" d="M11.500 0v24"/><path class="n" d="M9.500 1.500h4v4h-4zM9.500 8.500h4v4h-4zM9.500 18.500h4v4h-4z"/></svg></button>
            <button class="ico" aria-label="Distribute nodes horizontally"><svg viewBox="0 0 24 24"><path d="M0 18C4 5 8 5 12 12s8 8 11 0" class="g"/><path class="r" d="M2.500 0v15M11.500 0v12M20.500 0v15"/><path class="k" d="M3 1.500h17M4.500 0v3M9.500 0v3M13.500 0v3M18.500 0v3"/><path class="n" d="M.5 13.500h4v4h-4zM9.500 10.500h4v4h-4zM18.500 13.500h4v4h-4z"/></svg></button>
            <button class="ico" aria-label="Distribute nodes vertically"><svg viewBox="0 0 24 24"><path d="M0 0c12 5 14 2 14 7S1 15 2 18s4 3 6 3" class="g"/><path class="r" d="M5 2.500h17M8 11.500h14M5 20.500h17"/><path class="k" d="M20.500 3v17M19 4.500h3M19 9.500h3M19 13.500h3M19 18.500h3"/><path class="n" d="M4.500.5h4v4h-4zM7.500 9.500h4v4h-4zM4.500 18.500h4v4h-4z"/></svg></button>
          </div>
        </fieldset>
      </div>
    </section>

    <div class="vscroll dockscroll">
      <button class="arrow up off" aria-label="Scroll dialog up"></button><span class="thumb"><i></i></span><span class="trackpart t2"></span><button class="arrow down" aria-label="Scroll dialog down"></button>
    </div>
  </main>

  <div class="palette">
    <div class="swatches" id="swatches"><button class="none" aria-label="None"><svg viewBox="0 0 16 16"><path d="M1 1l14 14M15 1L1 15" stroke="#7a1010" stroke-width="1.500"/></svg></button></div>
    <button class="palmenu" aria-label="Palette menu"><svg viewBox="0 0 5 8"><path d="M4.500 0v8L.5 4z"/></svg></button>
  </div>

  <div class="hscroll palscroll">
    <button class="arrow left off" aria-label="Scroll palette left"></button><span class="thumb"><svg viewBox="0 0 10 10"><use href="#hgrip"/></svg></span><span class="trackpart t2"></span><button class="arrow right" aria-label="Scroll palette right"></button>
  </div>

  <footer class="status">
    <div class="style"><span>Fill:</span><em>None</em><span></span><span>Stroke:</span><span class="black"></span><span>1</span></div>
    <label class="olab" for="op">O:</label>
    <span class="spin opac"><input id="op" value="100"><span class="steps"><button aria-label="Increase opacity" class="off"></button><button aria-label="Decrease opacity"></button></span></span>
    <span class="bar"></span>
    <button class="mini" aria-label="Layer visibility"><svg viewBox="0 0 14 14"><path d="M1 7q6-5 12 0-6 5-12 0z" fill="#fff" stroke="#333"/><circle cx="7" cy="7" r="2.500" fill="#333"/><path d="M2 4l1 1M7 2v2M12 4l-1 1M4 3l1 1M10 3L9 4M3 11l1-1M7 12v-2M11 11l-1-1" stroke="#333"/></svg></button>
    <button class="mini" aria-label="Layer lock"><svg viewBox="0 0 14 14"><use href="#lock"/></svg></button>
    <select class="combo layer" aria-label="Layer"><option>•Layer 1</option></select>
    <p><strong>Path</strong> (4 nodes) in layer <strong>Layer 1</strong>. Click selection to toggle scale/rotation handles.</p>
    <div class="xy"><span>X:</span><span>451.13</span><span>Y:</span><span>-27.58</span></div>
    <label class="zlab" for="zm">Z:</label>
    <span class="spin zoom"><input id="zm" value="141%"><span class="steps"><button aria-label="Zoom in"></button><button aria-label="Zoom out"></button></span></span>
    <svg class="resize" viewBox="0 0 12 12"><path d="M11 0v12M8 3v9M5 6v6M2 9v3" stroke="#aaa" stroke-dasharray="1 2"/></svg>
  </footer>
</div>
<script src="script.js"></script>
</body>
</html>
```

FILE: styles.css
```
* { box-sizing: border-box; }
html, body { height: 100%; margin: 0; }
body { font: 13px/16px "DejaVu Sans", sans-serif; color: #000; overflow: hidden; }
button { border: 0; background: none; padding: 0; margin: 0; font: inherit; color: inherit; }
svg { display: block; }
.defs { position: absolute; width: 0; height: 0; }

.window { height: 100vh; display: flex; flex-direction: column; background: #eee; border: 4px solid #3f88d4; border-top: 0; }
.window { border-image: linear-gradient(90deg, #1f4876 0, #1f4876 1px, #418bd8 2px, #418bd8 calc(100% - 2px), #1f4876 calc(100% - 1px)) 4; }

.titlebar { height: 25px; flex: none; margin: 0 -4px; padding: 2px 6px 0 7px; display: flex; align-items: center; background: linear-gradient(#1f4876 0, #1f4876 1px, #5a9be0 2px, #3b7cc4 5px, #418fdc 25px); border-radius: 4px 4px 0 0; }
.appicon { width: 18px; height: 16px; margin-right: 6px; }
.titlebar h1 { flex: 1; margin: 0; font-size: 12px; font-weight: bold; color: #fff; text-shadow: 1px 1px 1px #1c3f6a; }
.winbtns { display: flex; gap: 2px; }
.winbtns button { width: 18px; height: 18px; border: 1px solid #2c69aa; border-radius: 3px; background: linear-gradient(#5c9ee2, #4b93dc); }
.winbtns svg { width: 16px; height: 16px; }

.menubar { height: 25px; flex: none; display: flex; gap: 13px; padding: 0 7px; background: linear-gradient(#ebebeb, #dfdfdf); border-bottom: 1px solid #c0c0c0; }
.menubar button { line-height: 26px; height: 24px; }
.menubar u { text-underline-offset: 2px; }

.toolbar { height: 34px; flex: none; display: flex; align-items: center; padding-left: 2px; background: #eee; box-shadow: inset 0 1px #fff, inset 0 -1px #c0c0c0; }
.toolbar.tall { height: 36px; }
.grip { width: 6px; height: 24px; margin-right: 3px; background: repeating-linear-gradient(#b0b0b0 0 1px, #fff 1px 2px, #eee 2px 3px); }
.grip.flat { width: 24px; height: 5px; margin: 3px auto 4px 5px; background: repeating-linear-gradient(90deg, #b0b0b0 0 1px, #fff 1px 2px, #eee 2px 3px); }
.tb, .tool { width: 30px; height: 30px; margin: 1px; flex: none; border-radius: 3px; display: flex; align-items: center; justify-content: center; }
.tb svg, .tool svg, .ico svg, .icongrid svg { width: 24px; height: 24px; }
.on { background: #c3c3c3; border: 1px solid #6a6a6a; box-shadow: inset 0 1px 2px #999; }
.tall .on { height: 32px; }
.sep { width: 12px; height: 20px; flex: none; background: linear-gradient(90deg, #bbb 1px, #fff 1px 2px, transparent 2px) 5px 0 no-repeat; }

.b, .b rect { fill: url(#gb); stroke: #1c2733; }
.y { fill: url(#gy); stroke: #332a10; }
.r { stroke: #d40000; fill: none; }
.k { stroke: #000; fill: none; }
.g { stroke: #999; fill: none; stroke-width: 1.200; }
.n { fill: #9cf; stroke: #11e; stroke-width: 1.300; }
.dis path { stroke: #b8b8b8; stroke-width: 1.300; stroke-dasharray: 2 1.500; }
.dis .solid { fill: #ccc; stroke: #aaa; }
.grn path { fill: none; stroke: #158015; stroke-width: 1.600; }
.ga { font: bold 14px "DejaVu Sans", sans-serif; fill: #3b5776; }
.gy { font: italic bold 20px "Liberation Serif", serif; fill: #111; }

.coord, .affect { font-size: 11px; }
.coord { width: 21px; padding-left: 8px; }
.spin + .coord { width: 22px; padding-left: 9px; }
.spin + .coord[for="cw"] { width: 26px; }
.coord.hlab { width: 16px; padding-left: 2px; }
.lockbtn { width: 14px; margin: 0 14px 0 10px; }
.lockbtn svg, .mini svg { width: 14px; height: 14px; }
.affect { width: 52px; padding-left: 9px; }
.spin { width: 64px; height: 22px; flex: none; display: flex; border: 1px solid #777; border-radius: 4px; background: #fff; box-shadow: inset 0 1px 1px #ccc; overflow: hidden; }
.spin input { flex: 1; min-width: 0; width: 0; border: 0; padding: 0 0 0 3px; background: transparent; font: 11px "DejaVu Sans", sans-serif; }
.steps { width: 12px; display: flex; flex-direction: column; border-left: 1px solid #777; background: #eee; }
.steps button { flex: 1; background: url("data:image/svg+xml,%3Csvg xmlns='http://www.w3.org/2000/svg' width='6' height='4'%3E%3Cpath d='M0 4h6L3 0z'/%3E%3C/svg%3E") center no-repeat; }
.steps button + button { border-top: 1px solid #bbb; background-image: url("data:image/svg+xml,%3Csvg xmlns='http://www.w3.org/2000/svg' width='6' height='4'%3E%3Cpath d='M0 0h6L3 4z'/%3E%3C/svg%3E"); }
.steps .off { opacity: 0.300; }
.spin.big { width: 58px; height: 25px; }
.spin.big input { font-size: 13px; }
.spin.big .steps { width: 14px; }

.combo { appearance: none; height: 32px; margin: 0; border: 1px solid #6d6d6d; border-radius: 4px; padding: 0 24px 0 5px; color: #000; font: 13px "DejaVu Sans", sans-serif; background: url("data:image/svg+xml,%3Csvg xmlns='http://www.w3.org/2000/svg' width='20' height='20'%3E%3Cpath d='M.5 0v20' stroke='%23bbb'/%3E%3Cpath d='M7 8.500h7L10.500 4zM7 11.500h7L10.500 16z'/%3E%3C/svg%3E") right 0 center no-repeat, linear-gradient(#fafafa, #e4e4e4); }
.unit { width: 51px; margin-left: 2px; font-size: 11px; }
.unit + .sep { width: 12px; }

.work { flex: 1; min-height: 0; display: flex; padding-left: 1px; }
.toolbox { width: 36px; flex: none; display: flex; flex-direction: column; }
.toolbox .tool { margin: 0 0 2px 1px; }
.more { width: 8px; margin: 26px 0 0 12px; }
.more svg { width: 8px; height: 10px; }

.editor { flex: 1; min-width: 0; display: grid; grid-template-columns: 12px 1fr 18px; grid-template-rows: 16px 1fr 18px; padding-bottom: 1px; }
.ruler { width: 100%; height: 100%; overflow: hidden; font: 9px "DejaVu Sans Condensed", "DejaVu Sans", sans-serif; fill: #222; }
.ruler g path { stroke: #000; fill: none; shape-rendering: crispEdges; }
.canvas { width: 100%; height: 100%; background: #fff; overflow: hidden; }
.drawtext { font: 22px "DejaVu Sans", sans-serif; }
.cornerbtn { display: flex; align-items: center; justify-content: center; }
.cornerbtn svg { width: 14px; height: 14px; }

.vscroll, .hscroll { display: flex; border: 1px solid #777; border-radius: 3px; background: #d5d5d5; overflow: hidden; }
.vscroll { flex-direction: column; width: 16px; }
.hscroll { height: 16px; }
.editor .vscroll { margin: 3px 0 0 2px; }
.editor .hscroll { margin-top: 2px; }
.arrow { width: 14px; height: 14px; flex: none; background-color: #f2f2f2; background-position: center; background-repeat: no-repeat; }
.up { border-bottom: 1px solid #777; background-image: url("data:image/svg+xml,%3Csvg xmlns='http://www.w3.org/2000/svg' width='7' height='4'%3E%3Cpath d='M0 4h7L3.500 0z'/%3E%3C/svg%3E"); }
.down { border-top: 1px solid #777; background-image: url("data:image/svg+xml,%3Csvg xmlns='http://www.w3.org/2000/svg' width='7' height='4'%3E%3Cpath d='M0 0h7L3.500 4z'/%3E%3C/svg%3E"); }
.left { border-right: 1px solid #777; background-image: url("data:image/svg+xml,%3Csvg xmlns='http://www.w3.org/2000/svg' width='4' height='7'%3E%3Cpath d='M4 0v7L0 3.500z'/%3E%3C/svg%3E"); }
.right { border-left: 1px solid #777; background-image: url("data:image/svg+xml,%3Csvg xmlns='http://www.w3.org/2000/svg' width='4' height='7'%3E%3Cpath d='M0 0v7L4 3.500z'/%3E%3C/svg%3E"); }
.arrow.off { opacity: 0.400; }
.thumb { display: flex; align-items: center; justify-content: center; }
.thumb svg { width: 10px; height: 10px; }
.vscroll .thumb { flex: 148; background: linear-gradient(90deg, #fff, #e4e4e4); border: solid #777; border-width: 1px 0; }
.hscroll .thumb { flex: 131; background: linear-gradient(#fff, #e4e4e4); border: solid #777; border-width: 0 1px; }
.vscroll i, .splitter i { width: 7px; height: 9px; background: repeating-linear-gradient(#999 0 1px, #fff 1px 2px, transparent 2px 3px); }
.vscroll .t1 { flex: 136; }
.vscroll .t2 { flex: 122; }
.hscroll .t1 { flex: 220; }
.hscroll .t2 { flex: 228; }

.splitter { width: 8px; flex: none; display: flex; align-items: center; justify-content: center; padding-top: 22px; }
.splitter i { height: 12px; }

.dock { width: 333px; flex: none; margin-top: 1px; border: solid #999; border-width: 1px 1px 0; padding: 0 2px; display: flex; flex-direction: column; overflow: hidden; }
.docktitle { height: 26px; flex: none; display: flex; align-items: center; padding: 0 6px 0 5px; background: #d0d0d0; border-bottom: 1px solid #999; }
.docktitle > svg { width: 16px; height: 16px; margin-right: 1px; }
.docktitle h2 { margin: 0; flex: 1; font-size: 12px; font-weight: normal; }
.docktitle button { margin-left: 11px; }
.docktitle button svg { width: 12px; height: 12px; }
.dockbody { flex: 1; min-height: 0; overflow: hidden; padding: 5px 5px 0 4px; border: solid #aaa; border-width: 0 1px; }
fieldset { margin: 0 0 6px; padding: 0; border: 1px solid #bdbdbd; box-shadow: inset 1px 1px #fff, 1px 1px #fff; min-width: 0; }
legend { margin-left: 2px; padding: 0 2px; line-height: 16px; }
.relrow { display: flex; align-items: center; height: 30px; }
.relrow label { flex: 1; text-align: right; margin-right: 34px; }
.rel { width: 184px; height: 29px; margin-right: 2px; }
.treatrow { display: flex; align-items: center; height: 23px; }
.treatrow label { flex: 1; text-align: right; margin-right: 42px; }
.treatrow input { appearance: none; width: 13px; height: 13px; margin: 0 71px 0 0; border: 1px solid #555; background: #fff; }
.icongrid { display: grid; grid-template-columns: repeat(6, 24px); gap: 12px; }
.al { padding: 6px 0 6px 7px; }
.di { grid-template-columns: repeat(5, 24px); padding: 6px 0 6px 43px; }
.c2 { grid-column: 2; }
.c4 { grid-column: 4; }
.overlap { display: flex; align-items: center; height: 36px; padding: 0 0 2px; }
.overlap label { width: 19px; padding-left: 1px; }
.overlap .spin + label { margin-left: 4px; width: 17px; padding-left: 0; }
.overlap .ico { margin-left: 10px; }
fieldset > .ico { margin: 6px 0 6px 7px; }
.noderow { display: flex; gap: 12px; padding: 6px 7px; }

.dockscroll { margin: 0 0 0 3px; flex: none; }
.dockscroll .thumb { flex: 219; border-top: 0; }
.dockscroll .t2 { flex: 227; }

.palette { height: 19px; flex: none; display: flex; padding-left: 1px; }
.swatches { flex: 1; min-width: 0; display: flex; overflow: hidden; border: solid #999; border-width: 1px 0; }
.swatches button { width: 16px; height: 100%; flex: none; }
.swatches .none { background: #fff; }
.swatches svg { width: 16px; height: 16px; }
.palmenu { width: 13px; display: flex; padding: 2px 0 0 3px; }
.palmenu svg { width: 5px; height: 8px; }
.palscroll { height: 15px; flex: none; margin: 3px 13px 0 1px; }
.palscroll .thumb { flex: 145; border-left: 0; }
.palscroll .t2 { flex: 848; }

.status { height: 27px; flex: none; display: flex; align-items: center; padding-left: 2px; }
.style { display: grid; grid-template-columns: 40px 70px 8px; grid-template-rows: 13px 13px; font-size: 10px; line-height: 13px; }
.style span:last-child { padding-left: 3px; }
.style em { text-align: center; padding-left: 8px; }
.black { background: #000; }
.olab, .zlab { font-size: 10px; }
.olab { width: 15px; margin-left: 6px; }
.opac { width: 36px; }
.opac .steps { width: 13px; }
.bar { width: 1px; height: 26px; background: #bbb; margin: 0 5px 0 4px; }
.mini { width: 14px; margin-right: 5px; }
.mini + .mini { margin-right: 4px; }
.layer { width: 87px; height: 24px; padding-right: 18px; font-size: 11px; font-weight: bold; }
.status p { flex: 1; min-width: 0; margin: 0 0 0 6px; white-space: nowrap; overflow: hidden; }
.xy { width: 60px; padding-left: 4px; border-left: 1px solid #bbb; display: grid; grid-template-columns: 14px 1fr; font-size: 10px; line-height: 13px; }
.xy span:nth-child(even) { text-align: right; }
.zlab { width: 19px; padding-left: 6px; }
.zoom { width: 55px; }
.zoom input { padding-left: 5px; }
.resize { width: 12px; height: 12px; margin: 10px 1px 0 8px; }
```

FILE: script.js
```
const SVG = "http://www.w3.org/2000/svg";
const STEP = 7.0711; // five user units at 141% zoom

function buildRuler(id, origin, sign, vertical) {
  const ruler = document.querySelector(id);
  const group = ruler.querySelector("g");
  const box = ruler.getBoundingClientRect();
  const limit = vertical ? box.height : box.width;
  let d = "";
  for (let i = -700; i <= 700; i++) {
    const p = Math.round(origin + sign * i * STEP) + 0.5;
    if (p < 0 || p > limit) continue;
    const major = i % 10 === 0;
    const len = major ? (vertical ? 12 : 14) : i % 2 === 0 ? (vertical ? 5 : 6) : (vertical ? 2 : 3);
    d += vertical ? `M${12 - len} ${p}H12` : `M${p} ${16 - len}V16`;
    if (!major) continue;
    const label = String(i * 5);
    const room = Math.floor((limit - p) / 5);
    const parts = vertical ? label.split("") : [label.slice(0, room)];
    parts.forEach((part, k) => {
      const text = document.createElementNS(SVG, "text");
      text.setAttribute("x", vertical ? 0 : p + 1.5);
      text.setAttribute("y", vertical ? p + 9 + k * 8 : 8);
      text.textContent = part;
      group.append(text);
    });
  }
  const path = document.createElementNS(SVG, "path");
  path.setAttribute("d", d);
  group.append(path);
}

buildRuler("#hruler", -109, 1, false);
buildRuler("#vruler", 373, -1, true);

const colors = `000 1a1a1a 333 4d4d4d 666 808080 999 b3b3b3 ccc e6e6e6 ececec f2f2f2 f9f9f9 fff
800000 f00 808000 ff0 008000 0f0 008080 0ff 000080 00f 800080 f0f
2b0000 500 800000 a00 d40000 f00 ff2a2a f55 ff8080 faa ffd5d5
280b0b 501616 782121 a02c2c c83737 d35f5f de8787 e9afaf f4d7d7
241c1c 483737 6c5353 916f6f ac9393 c8b7b7 e3dbdb
2b1100 520 803300 a40 d45500 f60 ff7f2a f95 ffb380 fca`.split(/\s+/);

const swatches = document.getElementById("swatches");
colors.forEach((color) => {
  const button = document.createElement("button");
  button.style.background = "#" + color;
  button.setAttribute("aria-label", "#" + color);
  swatches.append(button);
});
```
